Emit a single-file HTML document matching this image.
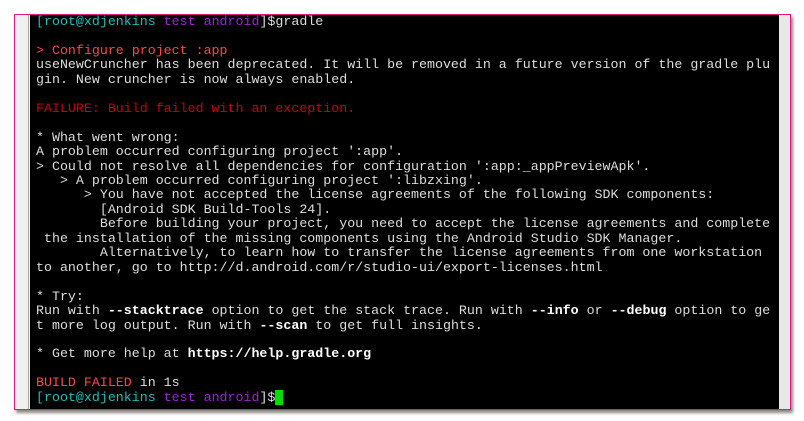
<!DOCTYPE html>
<html><head><style>
body{margin:0;width:804px;height:421px;background:#fff;position:relative;overflow:hidden}
.frame{position:absolute;left:14px;top:14px;width:775px;height:394px;border:1px solid #e8157e;background:#f0f0f0;box-shadow:2px 3px 3px #888}
.left{position:absolute;left:0;top:0;width:13px;height:100%;background:#f0f0f0;border-right:1px solid #aaa}
.term{position:absolute;left:15px;top:0;width:749px;height:100%;background:#000;overflow:hidden}
.sb{position:absolute;right:0;top:0;width:11px;height:100%;background:#e8e8e8}
pre{margin:0;padding:0 0 0 6px;font-family:"Liberation Mono",monospace;font-size:13.3px;line-height:14.45px;color:#ddd;white-space:pre}
.c{color:#2bb}.p{color:#a020d0}.r{color:#f44}.d{color:#c00}b{color:#fff}
.cur{background:#0d0;color:#0d0}
</style></head><body>
<div class="frame"><div class="left"></div><div class="term"><pre><span class="c">[root@xdjenkins</span> <span class="p">test android</span>]$gradle

<span class="r">&gt; Configure project :app</span>
useNewCruncher has been deprecated. It will be removed in a future version of the gradle plu
gin. New cruncher is now always enabled.

<span class="d">FAILURE: Build failed with an exception.</span>

* What went wrong:
A problem occurred configuring project ':app'.
&gt; Could not resolve all dependencies for configuration ':app:_appPreviewApk'.
   &gt; A problem occurred configuring project ':libzxing'.
      &gt; You have not accepted the license agreements of the following SDK components:
        [Android SDK Build-Tools 24].
        Before building your project, you need to accept the license agreements and complete
 the installation of the missing components using the Android Studio SDK Manager.
        Alternatively, to learn how to transfer the license agreements from one workstation
to another, go to http://d.android.com/r/studio-ui/export-licenses.html

* Try:
Run with <b>--stacktrace</b> option to get the stack trace. Run with <b>--info</b> or <b>--debug</b> option to ge
t more log output. Run with <b>--scan</b> to get full insights.

* Get more help at <b>https://help.gradle.org</b>

<span class="r">BUILD FAILED</span> in 1s
<span class="c">[root@xdjenkins</span> <span class="p">test android</span>]$<span class="cur">_</span></pre></div><div class="sb"></div></div>
</body></html>
